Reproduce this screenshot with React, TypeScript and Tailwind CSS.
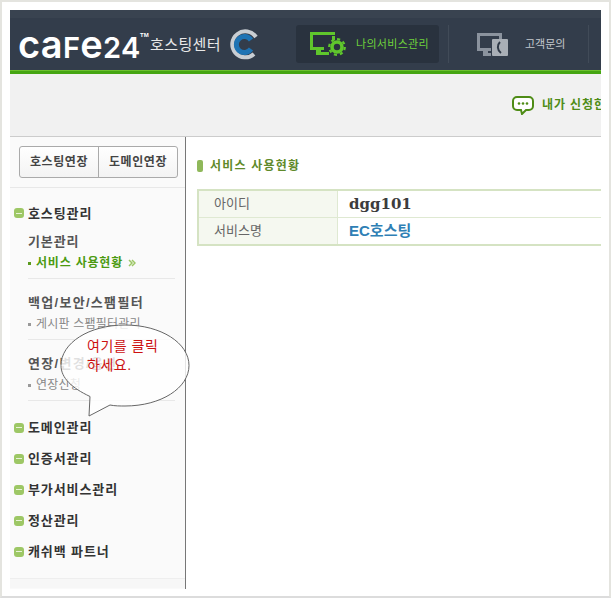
import React from "react";

const font = { fontFamily: '"Liberation Sans", "Noto Sans CJK KR", sans-serif' };

function Bullet() {
  return (
    <span className="flex h-[10px] w-[10px] shrink-0 items-center justify-center rounded-[3px] bg-[#9dc765]">
      <span className="h-px w-[6px] bg-[#e8f3d8]" />
    </span>
  );
}

function MainMenu({ label, className = "" }: { label: string; className?: string }) {
  return (
    <div className={"flex items-center gap-[4px] pl-[4px] " + className}>
      <Bullet />
      <span className="text-[13px] font-bold leading-none tracking-[0.9px] text-[#333]">{label}</span>
    </div>
  );
}

function SubGroup({ title, item, active, first }: { title: string; item: string; active?: boolean; first?: boolean }) {
  return (
    <div className={"ml-[18px] mr-[10px] border-b border-[#e8e8e8] " + (first ? "h-[57px] pt-[12px]" : "h-[61px] pt-[16px]")}>
      <div className={"text-[13px] font-bold leading-[16px] text-[#555] " + (first ? "tracking-[0.9px]" : "tracking-[1.3px]")}>{title}</div>
      <div className="mt-[6px] flex items-center gap-[5px] text-[12px] leading-[14px]">
        <span className={"h-[3px] w-[3px] " + (active ? "bg-[#5a9a1e]" : "bg-[#999]")} />
        <span className={active ? "font-bold tracking-[0.8px] text-[#4b9a10]" : "tracking-[0.2px] text-[#888]"}>{item}</span>
        {active && (
          <svg width="8" height="8" viewBox="0 0 8 8">
            <path d="M1 1l3 3-3 3M4 1l3 3-3 3" fill="none" stroke="#9dc765" strokeWidth="1.5" />
          </svg>
        )}
      </div>
    </div>
  );
}

function MyServiceIcon() {
  return (
    <svg width="36" height="24" viewBox="0 0 36 24">
      <path d="M0 0h25v3H3v12h11v3h-3v2h8v3H6v-5H0z" fill="#5fc62c" />
      <path d="M22 4h3v4h-3z" fill="#5fc62c" />
      <circle cx="27" cy="15" r="5" fill="none" stroke="#5fc62c" strokeWidth="3.6" />
      <circle cx="27" cy="15" r="7.8" fill="none" stroke="#5fc62c" strokeWidth="2.2" strokeDasharray="3.1 3" />
    </svg>
  );
}

function SupportIcon() {
  return (
    <svg width="31" height="23" viewBox="0 0 31 23">
      <path d="M0 0h25v6h-3V3H3v12h11v3h-3v2h3v3H6v-5H0z" fill="#8b939e" />
      <rect x="15" y="6" width="16" height="17" rx="1" fill="#a9afb6" />
      <path d="M23 9c-3 3-3 8 1 11" fill="none" stroke="#2f3947" strokeWidth="2" />
    </svg>
  );
}

function ChatIcon() {
  return (
    <svg width="22" height="19" viewBox="0 0 22 19">
      <path d="M5 1h12a4 4 0 0 1 4 4v5a4 4 0 0 1-4 4h-3l-4 4-1-4H5a4 4 0 0 1-4-4V5a4 4 0 0 1 4-4z" fill="#fff" stroke="#4e8c16" strokeWidth="2" />
      <circle cx="7" cy="7.5" r="1.3" fill="#4e8c16" />
      <circle cx="11" cy="7.5" r="1.3" fill="#4e8c16" />
      <circle cx="15" cy="7.5" r="1.3" fill="#4e8c16" />
    </svg>
  );
}

function CafeMark() {
  return (
    <svg width="30" height="31" viewBox="0 0 30 31">
      <path d="M26 8A13 13 0 1 0 24 25" fill="none" stroke="#c9ced3" strokeWidth="4" />
      <path d="M21 11A8 8 0 1 0 21 20" fill="none" stroke="#1f74b4" strokeWidth="5" />
    </svg>
  );
}

export default function App() {
  return (
    <div style={font} className="relative h-[598px] w-[611px] overflow-hidden border-2 border-x-[#e4e4df] border-t-[#e4e4df] border-b-[#dcdcdc] bg-white">
      <div className="mx-[8px] mt-[8px]">
        {/* Header */}
        <header className="flex h-[60px] items-center border-t-[8px] border-[#394350] bg-[#333d4b]">
          <div className="flex w-[286px] items-center pl-[8px]">
            <span className="flex w-[122px] items-baseline whitespace-nowrap font-semibold leading-none tracking-[0.3px] text-white" style={{ fontFamily: "Inter, sans-serif" }}>
              <span className="text-[38px]">ca</span>
              <span className="text-[29px]">F</span>
              <span className="text-[38px]">e</span>
              <span className="text-[29px]">24</span>
            </span>
            <span className="mb-[18px] w-[10px] text-[6px] font-bold text-white">TM</span>
            <span className="w-[80px] text-[15px] leading-none tracking-[0.4px] text-[#e8e8e8]">호스팅센터</span>
            <CafeMark />
          </div>
          <div className="flex h-[38px] w-[143px] items-center gap-[10px] rounded-[3px] bg-[#29323e] pl-[14px]">
            <MyServiceIcon />
            <span className="text-[11px] tracking-[0.3px] text-[#6fd13c]">나의서비스관리</span>
          </div>
          <div className="ml-[9px] flex h-[38px] w-[141px] items-center gap-[17px] border-x border-[#414b58] pl-[28px]">
            <SupportIcon />
            <span className="text-[11px] text-[#c3c8cd]">고객문의</span>
          </div>
        </header>
        <div className="h-[4px] border-t border-[#6cc02e] bg-[#45a512]" />
        {/* Notice band */}
        <div className="flex h-[63px] items-center justify-end overflow-hidden border-b border-[#ccc] bg-[#f1f1f1]">
          <div className="flex w-[89px] shrink-0 items-center gap-[8px] overflow-hidden whitespace-nowrap">
            <span className="shrink-0"><ChatIcon /></span>
            <span className="text-[12px] font-bold tracking-[0.9px] text-[#4e8c16]">내가 신청한</span>
          </div>
        </div>
        <div className="flex h-[452px]">
          {/* Sidebar */}
          <aside className="w-[176px] shrink-0 border-r border-[#777] bg-[#fafafa]">
            <div className="h-[51px] border-b border-[#e8e8e8] pl-[9px] pt-[9px]">
              <div className="flex h-[32px] w-[159px] overflow-hidden rounded-[3px] border border-[#aaa] bg-gradient-to-b from-white to-[#f3f3f3] text-[12px] font-bold tracking-[0.6px] text-[#444]">
                <div className="flex w-[79px] items-center justify-center border-r border-[#aaa]">호스팅연장</div>
                <div className="flex flex-1 items-center justify-center">도메인연장</div>
              </div>
            </div>
            <MainMenu label="호스팅관리" className="mt-[16px] h-[18px]" />
            <SubGroup title="기본관리" item="서비스 사용현황" active first />
            <SubGroup title="백업/보안/스팸필터" item="게시판 스팸필터관리" />
            <SubGroup title="연장/변경/옵션" item="연장신청" />
            <MainMenu label="도메인관리" className="mt-[11px] h-[31px]" />
            <MainMenu label="인증서관리" className="h-[31px]" />
            <MainMenu label="부가서비스관리" className="h-[31px]" />
            <MainMenu label="정산관리" className="h-[31px]" />
            <MainMenu label="캐쉬백 파트너" className="h-[31px]" />
            <div className="mt-[11px] h-[10px] border-t border-[#eee] bg-[#f7f7f7]" />
          </aside>
          {/* Content */}
          <main className="flex-1 overflow-hidden pl-[11px] pt-[20px]">
            <div className="flex items-center gap-[7px]">
              <span className="h-[12px] w-[6px] rounded-[2px] bg-[#8fb85a]" />
              <span className="text-[12px] font-bold tracking-[1.2px] text-[#5f8a2a]">서비스 사용현황</span>
            </div>
            <div className="mt-[14px] w-[420px] border-2 border-r-0 border-[#d5e3c3] text-[13px]">
              <div className="flex h-[27px] items-center border-b border-[#dfe9d2]">
                <div className="flex h-full w-[139px] items-center border-r border-[#dfe9d2] bg-[#f5f8f0] pl-[15px] text-[#666]">아이디</div>
                <div className="pl-[11px] text-[15px] font-bold text-[#3c3c3c]" style={{ fontFamily: '"DejaVu Serif", serif' }}>dgg101</div>
              </div>
              <div className="flex h-[26px] items-center">
                <div className="flex h-full w-[139px] items-center border-r border-[#dfe9d2] bg-[#f5f8f0] pl-[15px] text-[#666]">서비스명</div>
                <div className="pl-[11px] text-[15px] font-bold text-[#2f7fb5]">EC호스팅</div>
              </div>
            </div>
          </main>
        </div>
      </div>
      {/* Callout */}
      <div className="absolute left-[58px] top-[322px] h-[96px] w-[132px]">
        <svg width="132" height="96" viewBox="0 0 132 96" className="absolute inset-0">
          <path
            d="M30 72.5 C12 64 1 54 1 41.5 C1 19 29 1 65 1 C101 1 129 19 129 41.5 C129 64 101 82 65 82 C60 82 55 82 50 81 L29 92 Z"
            fill="#fff"
            fillOpacity="0.82"
            stroke="#666"
          />
        </svg>
        <div className="absolute left-[27px] top-[13px] w-[90px] text-[14px] leading-[19px] tracking-[0.5px] text-[#cc1111]">
          여기를 클릭
          <br />
          하세요.
        </div>
      </div>
    </div>
  );
}
